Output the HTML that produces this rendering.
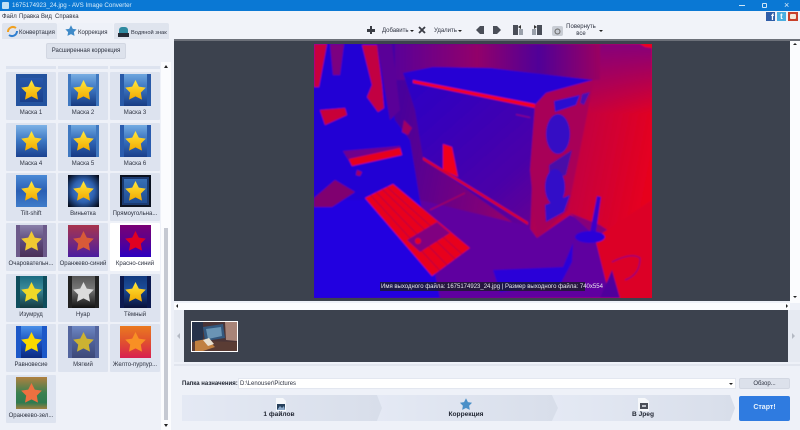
<!DOCTYPE html>
<html lang="ru"><head><meta charset="utf-8"><title>AVS Image Converter</title>
<style>
*{box-sizing:border-box}
html,body{margin:0;padding:0;width:800px;height:430px;overflow:hidden;background:#eef1f8;font-family:"Liberation Sans",sans-serif;color:#2a2e38}
body{filter:blur(.3px)}
.a{position:absolute}
.t{position:absolute;font-size:6px;line-height:8px;white-space:nowrap;color:#2d3240}
.c{text-align:center}
.it{position:absolute;width:50px;height:48px;background:#dde3ef;border-radius:1px}
.it .ic{position:absolute;left:9.5px;top:2px;width:31px;height:32px;overflow:hidden}
.it .ic svg{position:absolute;left:0;top:0;width:31px;height:32px}
.it .l{position:absolute;left:0;width:50px;top:37px;text-align:center;font-size:6px;line-height:8px;white-space:nowrap;color:#2d3240}
.tab{position:absolute;top:23px;height:17px;background:#dfe4ee;border-radius:2px 2px 0 0}
</style></head><body>
<svg width="0" height="0" style="position:absolute"><defs>
<polygon id="s" points="15.5,6 18.8,12.6 25.8,13.6 20.8,18.6 22,25.6 15.5,22.4 9,25.6 10.2,18.6 5.2,13.6 12.2,12.6"/>
<linearGradient id="y" x1="0" y1="0" x2="0" y2="1"><stop offset="0" stop-color="#ffe83c"/><stop offset="1" stop-color="#f2a900"/></linearGradient>
</defs></svg>

<!-- title bar -->
<div class="a" style="left:0;top:0;width:800px;height:11px;background:#0a78d4"></div>
<div class="a" style="left:2px;top:2px;width:7px;height:7px;background:#bfe0f5;border-radius:1px"></div>
<div class="t" style="left:12px;top:2px;color:#d8ecfa;font-size:6.2px">1675174923_24.jpg - AVS Image Converter</div>
<div class="a" style="left:739px;top:5px;width:6px;height:1px;background:#cfe6f7"></div>
<div class="a" style="left:762px;top:3px;width:5px;height:5px;border:1px solid #cfe6f7;border-radius:1px"></div>
<div class="t" style="left:784px;top:1px;color:#dcedf9;font-size:9px">×</div>

<!-- toolbar & menu -->
<div class="a" style="left:0;top:11px;width:800px;height:29px;background:#f1f3f9"></div>
<div class="a" style="left:0;top:39px;width:800px;height:2px;background:#6c7079"></div>
<div class="t" style="left:2px;top:12.5px">Файл</div>
<div class="t" style="left:19px;top:12.5px">Правка</div>
<div class="t" style="left:41px;top:12.5px">Вид</div>
<div class="t" style="left:55px;top:12.5px">Справка</div>

<!-- tabs -->
<div class="a" style="left:0;top:40px;width:174px;height:390px;background:#eef1f8"></div>
<div class="tab" style="left:2px;width:55px"></div>
<div class="tab" style="left:57px;width:56px;background:#eef1f8"></div>
<div class="tab" style="left:114px;width:55px"></div>
<div class="a" style="left:0;top:39px;width:174px;height:2px;background:#eef1f8"></div>
<svg class="a" style="left:6px;top:25px" width="13" height="13" viewBox="0 0 13 13"><path d="M2 7A5 5 0 0 1 10 3" fill="none" stroke="#f0a020" stroke-width="2"/><path d="M11 6A5 5 0 0 1 3 10" fill="none" stroke="#2f7fd0" stroke-width="2"/></svg>
<div class="t" style="left:19px;top:29px">Конвертация</div>
<svg class="a" style="left:65px;top:25px" width="12" height="12" viewBox="0 0 31 32"><use href="#s" transform="translate(-7 -8) scale(1.45)" fill="#3f8ac8"/></svg>
<div class="t" style="left:78px;top:29px">Коррекция</div>
<div class="a" style="left:119px;top:27px;width:9px;height:6px;background:#2f8aa0;border-radius:3px 3px 0 0"></div>
<div class="a" style="left:118px;top:33px;width:11px;height:4px;background:#252a35"></div>
<div class="t" style="left:131px;top:29px;font-size:5.7px">Водяной знак</div>

<div class="a" style="left:46px;top:43px;width:80px;height:16px;background:#dde2ec;border:1px solid #d2d7e2;border-radius:2px"></div>
<div class="t c" style="left:46px;top:47px;width:80px">Расширенная коррекция</div>

<!-- list -->
<div class="a" style="left:161px;top:62px;width:10px;height:368px;background:#fbfcfe"></div>
<div class="a" style="left:164px;top:228px;width:4px;height:192px;background:#c5c9d2"></div>
<div class="a" style="left:164px;top:65px;border-left:2px solid transparent;border-right:2px solid transparent;border-bottom:3px solid #222"></div>
<div class="a" style="left:164px;top:424px;border-left:2px solid transparent;border-right:2px solid transparent;border-top:3px solid #222"></div>
<div class="a" style="left:6px;top:66px;width:50px;height:3px;background:#dde3ef"></div>
<div class="a" style="left:58px;top:66px;width:50px;height:3px;background:#dde3ef"></div>
<div class="a" style="left:110px;top:66px;width:50px;height:3px;background:#dde3ef"></div>

<div class="it" style="left:6px;top:72px"><div class="ic" style="background:linear-gradient(#2a5cb0,#173b86);box-shadow:inset 0 0 0 4px #24539f"><svg viewBox="0 0 31 32"><use href="#s" fill="url(#y)"/></svg></div><div class="l">Маска 1</div></div>
<div class="it" style="left:58px;top:72px"><div class="ic" style="background:linear-gradient(#79aee2,#3d78c4 45%,#163a80);box-shadow:inset 3px 0 0 #3f78c0,inset -3px 0 0 #3f78c0"><svg viewBox="0 0 31 32"><use href="#s" fill="url(#y)"/></svg></div><div class="l">Маска 2</div></div>
<div class="it" style="left:110px;top:72px"><div class="ic" style="background:linear-gradient(#6ea6de,#3a74c0 45%,#183c84);box-shadow:inset 4px 0 0 #295aa8,inset -4px 0 0 #295aa8"><svg viewBox="0 0 31 32"><use href="#s" fill="url(#y)"/></svg></div><div class="l">Маска 3</div></div>

<div class="it" style="left:6px;top:122.7px"><div class="ic" style="background:linear-gradient(#7db2e6,#3b76c2 50%,#1b4290)"><svg viewBox="0 0 31 32"><use href="#s" fill="url(#y)"/></svg></div><div class="l">Маска 4</div></div>
<div class="it" style="left:58px;top:122.7px"><div class="ic" style="background:linear-gradient(#6fa8e0,#2f66b6 50%,#173a84);box-shadow:inset 3px 0 0 #3f78c0,inset -3px 0 0 #3f78c0"><svg viewBox="0 0 31 32"><use href="#s" fill="url(#y)"/></svg></div><div class="l">Маска 5</div></div>
<div class="it" style="left:110px;top:122.7px"><div class="ic" style="background:linear-gradient(#74ace2,#356ebc 50%,#1a3f8a);box-shadow:inset 4px 0 0 #2a5cae,inset -4px 0 0 #2a5cae"><svg viewBox="0 0 31 32"><use href="#s" fill="url(#y)"/></svg></div><div class="l">Маска 6</div></div>

<div class="it" style="left:6px;top:173px"><div class="ic" style="background:linear-gradient(#4a8ad6,#2a5fb4 50%,#3f7cca)"><svg viewBox="0 0 31 32"><use href="#s" fill="url(#y)"/></svg></div><div class="l">Tilt-shift</div></div>
<div class="it" style="left:58px;top:173px"><div class="ic" style="background:radial-gradient(ellipse at center,#4f8fd8 0%,#2c5fae 50%,#050a18 95%)"><svg viewBox="0 0 31 32"><use href="#s" fill="url(#y)"/></svg></div><div class="l">Виньетка</div></div>
<div class="it" style="left:110px;top:173px"><div class="ic" style="background:linear-gradient(#3a72b8,#1d4a90);border:2px solid #0b1220;box-shadow:inset 0 0 0 2px #1b3a70"><svg viewBox="0 0 31 32" style="left:-2px;top:-2px"><use href="#s" fill="url(#y)"/></svg></div><div class="l">Прямоугольна...</div></div>

<div class="it" style="left:6px;top:223px"><div class="ic" style="background:linear-gradient(#8a80aa,#5a4678 55%,#4a3058);box-shadow:inset 4px 0 0 #6c5a8a,inset -4px 0 0 #6c5a8a"><svg viewBox="0 0 31 32"><use href="#s" fill="#f0c832"/></svg></div><div class="l">Очаровательн...</div></div>
<div class="it" style="left:58px;top:223px"><div class="ic" style="background:linear-gradient(#a8344c,#7a2a78 50%,#4a1ca0)"><svg viewBox="0 0 31 32"><use href="#s" fill="#d85a38"/></svg></div><div class="l">Оранжево-синий</div></div>
<div class="it" style="left:110px;top:223px;background:#fff"><div class="ic" style="background:linear-gradient(#7a0074,#5a0090 50%,#2c00c0)"><svg viewBox="0 0 31 32"><use href="#s" fill="#e00022"/></svg></div><div class="l">Красно-синий</div></div>

<div class="it" style="left:6px;top:274px"><div class="ic" style="background:linear-gradient(#1a6a80,#3a8a9a 40%,#143a40);box-shadow:inset 4px 0 0 #0e4d5c,inset -4px 0 0 #0e4d5c"><svg viewBox="0 0 31 32"><use href="#s" fill="#f0d828"/></svg></div><div class="l">Изумруд</div></div>
<div class="it" style="left:58px;top:274px"><div class="ic" style="background:linear-gradient(#555,#777 40%,#111);box-shadow:inset 4px 0 0 #222,inset -4px 0 0 #222"><svg viewBox="0 0 31 32"><use href="#s" fill="#dcdcdc"/></svg></div><div class="l">Нуар</div></div>
<div class="it" style="left:110px;top:274px"><div class="ic" style="background:linear-gradient(#123a80,#1c4c98 40%,#081038);box-shadow:inset 4px 0 0 #0c1a50,inset -4px 0 0 #0c1a50"><svg viewBox="0 0 31 32"><use href="#s" fill="url(#y)"/></svg></div><div class="l">Тёмный</div></div>

<div class="it" style="left:6px;top:324px"><div class="ic" style="background:linear-gradient(#4a90e8,#1a50c0 50%,#0a2a80);box-shadow:inset 5px 0 0 #1c58c8,inset -5px 0 0 #1c58c8"><svg viewBox="0 0 31 32"><use href="#s" fill="#fad800"/></svg></div><div class="l">Равновесие</div></div>
<div class="it" style="left:58px;top:324px"><div class="ic" style="background:linear-gradient(#6e88c4,#4e6098 50%,#3c4878);box-shadow:inset 4px 0 0 #53659e,inset -4px 0 0 #53659e"><svg viewBox="0 0 31 32"><use href="#s" fill="#ccb232"/></svg></div><div class="l">Мягкий</div></div>
<div class="it" style="left:110px;top:324px"><div class="ic" style="background:linear-gradient(#ea7a20,#e05030 50%,#d82050)"><svg viewBox="0 0 31 32"><use href="#s" fill="#f89024"/></svg></div><div class="l">Желто-пурпур...</div></div>

<div class="it" style="left:6px;top:375px"><div class="ic" style="background:linear-gradient(#b08040,#3a8050 50%,#2f7a50 80%,#a08040)"><svg viewBox="0 0 31 32"><use href="#s" fill="#ee7040"/></svg></div><div class="l">Оранжево-зел...</div></div>

<!-- toolbar icons -->
<div class="a" style="left:367px;top:29px;width:8px;height:2.5px;background:#3a3d45"></div>
<div class="a" style="left:369.7px;top:26px;width:2.5px;height:8px;background:#3a3d45"></div>
<div class="t" style="left:382px;top:27px">Добавить</div>
<div class="a" style="left:410px;top:30px;border-left:2px solid transparent;border-right:2px solid transparent;border-top:2px solid #222"></div>
<svg class="a" style="left:418px;top:26px" width="8" height="8" viewBox="0 0 8 8"><path d="M1 1L7 7M7 1L1 7" stroke="#3a3d45" stroke-width="1.8"/></svg>
<div class="t" style="left:434px;top:27px">Удалить</div>
<div class="a" style="left:458px;top:30px;border-left:2px solid transparent;border-right:2px solid transparent;border-top:2px solid #222"></div>
<svg class="a" style="left:476px;top:26px" width="8" height="8" viewBox="0 0 8 8"><path d="M0 4L4 0H8V8H4Z" fill="#4a4e58"/></svg>
<svg class="a" style="left:493px;top:26px" width="8" height="8" viewBox="0 0 8 8"><path d="M8 4L4 0H0V8H4Z" fill="#4a4e58"/></svg>
<svg class="a" style="left:513px;top:25px" width="12" height="10" viewBox="0 0 12 10"><path d="M0 0H5V10H0Z" fill="#4a4e58"/><path d="M6 4H10V10H6Z" fill="#9aa0aa"/><path d="M5 2L8 0V4Z" fill="#333"/></svg>
<svg class="a" style="left:530px;top:25px" width="12" height="10" viewBox="0 0 12 10"><path d="M7 0H12V10H7Z" fill="#4a4e58"/><path d="M2 4H6V10H2Z" fill="#9aa0aa"/><path d="M7 2L4 0V4Z" fill="#333"/></svg>
<div class="a" style="left:552px;top:26px;width:11px;height:10px;background:#c8ccd4;border-radius:2px"></div>
<svg class="a" style="left:554px;top:28px" width="7" height="7" viewBox="0 0 7 7"><path d="M1 3.5A2.5 2.5 0 0 1 6 3.5M6 3.5A2.5 2.5 0 0 1 1 3.5" fill="none" stroke="#666" stroke-width="1"/></svg>
<div class="t c" style="left:566px;top:24px;width:30px;line-height:7px">Повернуть<br>все</div>
<div class="a" style="left:599px;top:30px;border-left:2px solid transparent;border-right:2px solid transparent;border-top:2px solid #222"></div>

<!-- social -->
<div class="a" style="left:766px;top:12px;width:9px;height:9px;background:#2f5da8;color:#fff;font:bold 9px/10px 'Liberation Sans',sans-serif;text-align:right;padding-right:1px">f</div>
<div class="a" style="left:777px;top:12px;width:9px;height:9px;background:#4aaee0;color:#fff;font:bold 8px/9px 'Liberation Sans',sans-serif;text-align:center">t</div>
<div class="a" style="left:788px;top:12px;width:10px;height:9px;background:#c8402a"></div>
<div class="a" style="left:790px;top:14px;width:6px;height:5px;background:#f4e8d8;border-radius:1px"></div>

<!-- main -->
<div class="a" style="left:174px;top:41px;width:616px;height:260px;background:#3c424e"></div>
<div class="a" style="left:790px;top:41px;width:10px;height:262px;background:#fbfcfe"></div>
<div class="a" style="left:793px;top:43px;border-left:2px solid transparent;border-right:2px solid transparent;border-bottom:2px solid #222"></div>
<div class="a" style="left:793px;top:296px;border-left:2px solid transparent;border-right:2px solid transparent;border-top:2px solid #222"></div>
<div class="a" style="left:174px;top:303px;width:616px;height:7px;background:#fbfcfe"></div>
<div class="a" style="left:176px;top:304px;border-top:2px solid transparent;border-bottom:2px solid transparent;border-right:2px solid #222"></div>
<div class="a" style="left:786px;top:304px;border-top:2px solid transparent;border-bottom:2px solid transparent;border-left:2px solid #222"></div>

<svg class="a" style="left:314px;top:44px" width="338" height="254" viewBox="314 44 338 254">
<defs>
<linearGradient id="bg" x1="0" y1="0" x2="1" y2="0.15"><stop offset="0" stop-color="#2000dc"/><stop offset=".3" stop-color="#48009c"/><stop offset=".58" stop-color="#800078"/><stop offset=".8" stop-color="#c40040"/><stop offset="1" stop-color="#e6001e"/></linearGradient>
<linearGradient id="body" x1="0" y1="0" x2="1" y2="1"><stop offset="0" stop-color="#2800c8"/><stop offset=".6" stop-color="#4a00a8"/><stop offset="1" stop-color="#7a0080"/></linearGradient>
<linearGradient id="wall" x1="0" y1="0" x2="1" y2="0"><stop offset="0" stop-color="#5a0098"/><stop offset=".4" stop-color="#92006a"/><stop offset=".7" stop-color="#500098"/><stop offset="1" stop-color="#9a0060"/></linearGradient>
<linearGradient id="rt" x1="0" y1="0" x2="0" y2="1"><stop offset="0" stop-color="#86007a"/><stop offset="1" stop-color="#86007a" stop-opacity="0"/></linearGradient>
<filter id="b"><feGaussianBlur stdDeviation="0.7"/></filter>
</defs>
<g filter="url(#b)">
<rect x="300" y="30" width="370" height="280" fill="url(#bg)"/>
<rect x="590" y="44" width="62" height="70" fill="url(#rt)"/>
<polygon points="640,44 652,44 652,48 645,47" fill="#f0001c"/>
<rect x="395" y="44" width="205" height="36" fill="url(#wall)"/>
<!-- upper-left -->
<polygon points="314,44 380,44 395,120 410,140 420,200 314,200" fill="#2400d4"/>
<polygon points="314,44 327,44 319,87 314,87" fill="#c8003c"/>
<polygon points="330,44 344,44 340,75 333,75" fill="#7c0080"/>
<polygon points="362,45 377,45 382,85 384,108 378,112 367,97 372,85" fill="#c20042"/>
<polygon points="377,44 392,44 400,110 390,120" fill="#5a0098"/>
<polygon points="320,110 345,108 347,115 325,125" fill="#c80038"/>
<polygon points="343,151 400,146 402,155 352,166" fill="#70008c"/>
<polygon points="349,159 400,148 402,155 352,166" fill="#e6001e"/>
<polygon points="404,120 412,128 408,135 402,132" fill="#a00060"/>
<!-- case body -->
<polygon points="403,73 433,67 490,68 593,80 548,92 535,105 530,235 423,158 415,110" fill="url(#body)"/>
<polygon points="403,73 433,67 490,68 593,80 546,93 535,105 470,92 413,80" fill="#2600d4"/>
<polygon points="413,80 535,104 535,108 413,83" fill="#f4001c"/>
<polygon points="443,144 452,147 458,177 443,170" fill="#f0001c"/>
<polygon points="423,157 528,222 528,225 423,160" fill="#d8002c"/>
<polygon points="516,114 530,117 530,118 516,115" fill="#a00070"/>
<!-- panel -->
<polygon points="535,105 546,93 594,80 568,210 537,238 530,170" fill="#a80058"/>
<polygon points="554,101 580,95 576,105 555,112" fill="#2a10d0"/>
<polygon points="582,94 590,92 584,105 580,103" fill="#4c10b0"/>
<ellipse cx="558" cy="134" rx="12" ry="20" fill="#3410c4"/>
<polygon points="549,165 572,150 566,175 549,180" fill="#4810a8"/>
<ellipse cx="555" cy="187" rx="10" ry="18" fill="#3010c8"/>
<polygon points="545,205 570,195 564,212 546,222" fill="#3010c8"/>
<!-- desk -->
<polygon points="314,200 420,200 530,235 500,298 314,298" fill="#2000e0"/>
<polygon points="420,200 528,226 537,238 570,215 625,240 640,298 440,298" fill="#5e00a0"/>
<polygon points="570,213 600,225 627,243 652,262 652,298 625,298 610,250" fill="#86007a"/>
<polygon points="595,238 652,200 652,298 610,298" fill="#dc0028"/>
<polygon points="493,270 563,267 573,243 572,262 560,285 500,292" fill="#2a00d8"/>
<polygon points="597,196 601,197 596,232 590,232" fill="#3a00c8"/>
<ellipse cx="590" cy="237" rx="15" ry="6" fill="#2c00d8"/>
<path d="M612 262Q632 252 640 258Q640 275 625 280" fill="none" stroke="#7a0088" stroke-width="1"/>
<polygon points="600,298 612,270 620,298" fill="#50009c"/>
<!-- pad & keyboard -->
<polygon points="314,198 335,180 355,192 332,207 314,207" fill="#800070"/>
<polygon points="357,170 362,172 360,176 356,175" fill="#a00060"/>
<polygon points="365,198 393,184 470,248 432,276" fill="#e8001e"/>
<path d="M370.6 195.2L439.6 270.4M376 192L447 265M382 189L455 259M387 187L462 254" stroke="#a80048" stroke-width=".8"/>
<polygon points="407,240 437,222 450,233 420,252" fill="#800080"/>
<circle cx="418" cy="241" r="3" fill="#e6001e"/>
<path d="M430 210L465 193" stroke="#b00050" stroke-width="1" fill="none"/>
</g>
<rect x="380" y="282" width="205" height="9" fill="#1a1c2a" fill-opacity=".82"/>
</svg>
<div class="t" style="left:381px;top:282.5px;color:#e8e8ee;width:204px;font-size:6px">Имя выходного файла: 1675174923_24.jpg | Размер выходного файла: 740x554</div>

<!-- filmstrip -->
<div class="a" style="left:174px;top:310px;width:10px;height:52px;background:#e6eaf2"></div>
<div class="a" style="left:177px;top:333px;border-top:3px solid transparent;border-bottom:3px solid transparent;border-right:3px solid #b4b9c3"></div>
<div class="a" style="left:184px;top:310px;width:604px;height:52px;background:#3c424e"></div>
<div class="a" style="left:788px;top:310px;width:12px;height:52px;background:#e6eaf2"></div>
<div class="a" style="left:792px;top:333px;border-top:3px solid transparent;border-bottom:3px solid transparent;border-left:3px solid #b4b9c3"></div>
<svg class="a" style="left:191px;top:321px" width="47" height="31" viewBox="0 0 47 31">
<rect width="47" height="31" fill="#fff"/><rect x="1" y="1" width="45" height="29" fill="#4a3436"/>
<rect x="1" y="1" width="11" height="20" fill="#26324a"/>
<polygon points="12,6 32,3 34,17 14,20" fill="#34587e"/>
<polygon points="15,8 30,6 31,15 17,18" fill="#6a94b4"/>
<polygon points="34,1 46,1 46,20 35,19" fill="#a88478"/>
<polygon points="1,21 14,20 46,21 46,30 1,30" fill="#5a3c34"/>
<polygon points="4,20 16,18 24,26 12,30 4,30" fill="#c08040"/>
<polygon points="12,19 18,17 23,23 17,25" fill="#e8e0d0"/>
</svg>

<!-- bottom -->
<div class="a" style="left:174px;top:364px;width:626px;height:2px;background:#e1e5ee"></div>
<div class="t" style="left:182px;top:379.5px;font-weight:bold;color:#1f2430">Папка назначения:</div>
<div class="a" style="left:238px;top:378px;width:498px;height:11px;background:#fff;border:1px solid #e3e7f0"></div>
<div class="t" style="left:240px;top:379.5px">D:\Lenouser\Pictures</div>
<div class="a" style="left:729px;top:383px;border-left:2px solid transparent;border-right:2px solid transparent;border-top:2px solid #222"></div>
<div class="a" style="left:739px;top:378px;width:51px;height:11px;background:#dce1eb;border:1px solid #d2d7e2;border-radius:2px"></div>
<div class="t c" style="left:739px;top:379.5px;width:51px">Обзор...</div>
<svg class="a" style="left:182px;top:395px" width="556" height="27" viewBox="0 0 556 27">
<defs><linearGradient id="st" x1="0" y1="0" x2="1" y2="0"><stop offset="0" stop-color="#e4e9f4"/><stop offset="1" stop-color="#d8deea"/></linearGradient></defs>
<polygon points="0,0 548,0 553,13 548,26 0,26" fill="#dfe4f0"/>
<polygon points="0,0 195,0 200,13 195,26 0,26" fill="url(#st)"/>
<polygon points="195,0 370,0 376,13 370,26 195,26 200,13" fill="url(#st)"/>
<polygon points="370,0 548,0 553,13 548,26 370,26 376,13" fill="url(#st)"/>
</svg>
<svg class="a" style="left:274px;top:398px" width="13" height="13" viewBox="0 0 13 13"><path d="M2 0H9L12 3V13H2Z" fill="#f6f8fb"/><rect x="3" y="6" width="8" height="6" fill="#26405c"/><path d="M3 12L6 8L8 10L10 8L11 12Z" fill="#8aa8c8"/></svg>
<div class="t c" style="left:244px;top:411px;width:70px;font-size:6.6px;font-weight:bold;color:#1f2430">1 файлов</div>
<svg class="a" style="left:459px;top:398px" width="14" height="13" viewBox="0 0 31 32"><use href="#s" transform="translate(-7 -8) scale(1.45)" fill="#4a90c8"/></svg>
<div class="t c" style="left:431px;top:411px;width:70px;font-size:6.6px;font-weight:bold;color:#1f2430">Коррекция</div>
<svg class="a" style="left:637px;top:398px" width="13" height="13" viewBox="0 0 13 13"><path d="M1 0H8L12 3V13H1Z" fill="#f6f8fb"/><rect x="3" y="5" width="8" height="6" fill="#4a4e58"/><rect x="5" y="7" width="4" height="2" fill="#c0c4cc"/></svg>
<div class="t c" style="left:608px;top:411px;width:70px;font-size:6.6px;font-weight:bold;color:#1f2430">В Jpeg</div>
<div class="a" style="left:739px;top:396px;width:51px;height:25px;background:#2f7be0;border-radius:2px"></div>
<div class="t c" style="left:739px;top:404px;width:51px;font-size:7px;font-weight:bold;color:#e8f2fc">Старт!</div>
</body></html>
